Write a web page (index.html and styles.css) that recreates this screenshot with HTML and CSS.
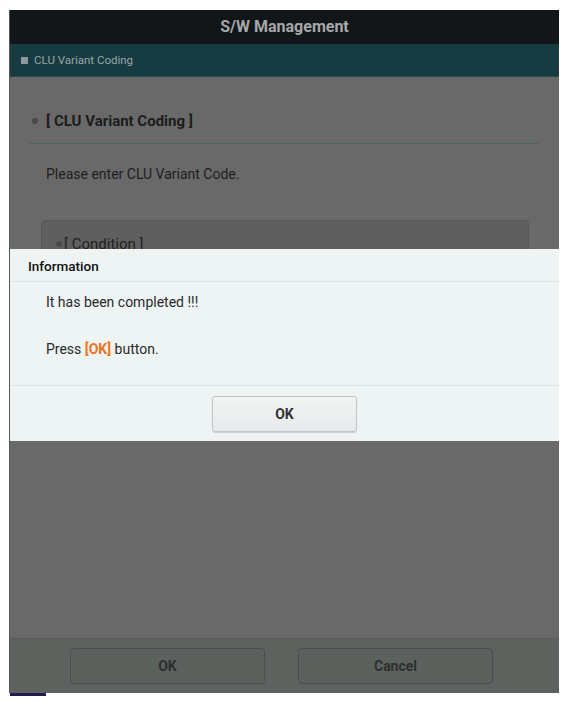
FILE: index.html
```html
<!DOCTYPE html>
<html lang="en">
<head>
    <meta charset="UTF-8">
    <meta name="viewport" content="width=device-width, initial-scale=1.0">
    <title>S/W Management</title>
    <link rel="stylesheet" href="styles.css">
</head>
<body>
    <div class="screen">
        <div class="titlebar">S/W Management</div>
        <div class="menubar"><span class="square"></span>CLU Variant Coding</div>
        <div class="content">
            <h2 class="section-title"><span class="dot"></span>[ CLU Variant Coding ]</h2>
            <p class="hint">Please enter CLU Variant Code.</p>
            <div class="condition">
                <h3><span class="dot small"></span>[ Condition ]</h3>
            </div>
        </div>
        <div class="footer">
            <button>OK</button>
            <button>Cancel</button>
        </div>

        <!-- popup over the dimmed screen -->
        <div class="dialog">
            <div class="dialog-header">Information</div>
            <div class="dialog-body">
                <p>It has been completed !!!</p>
                <p>Press <span class="key">[OK]</span> button.</p>
            </div>
            <div class="dialog-footer">
                <button>OK</button>
            </div>
        </div>
    </div>
    <div class="task-stub"></div>
</body>
</html>
```

FILE: styles.css
```css
body {
    margin: 0;
    background-color: #ffffff;
    font-family: Roboto, "Liberation Sans", sans-serif;
}

.screen {
    position: relative;
    margin: 10px 0 0 9px;
    width: 550px;
    height: 683px;
    display: flex;
    flex-direction: column;
    background-color: #696969;
    border-left: 1px solid #585858;
    box-sizing: border-box;
    overflow: hidden;
}

.titlebar {
    height: 34px;
    line-height: 34px;
    background-color: #121619;
    color: #a6a8a9;
    text-align: center;
    font-size: 16px;
    font-weight: bold;
}

.menubar {
    height: 33px;
    display: flex;
    align-items: center;
    padding-left: 11px;
    background-color: #163b41;
    color: #9aa5a7;
    font-size: 11.5px;
    border-bottom: 1px solid #2f4a4d;
    box-sizing: border-box;
}

.square {
    width: 7px;
    height: 7px;
    background-color: #8f999b;
    margin-right: 6px;
}

.content {
    flex: 1;
    padding: 0 20px 0 19px;
    overflow: hidden;
}

.section-title {
    display: flex;
    align-items: center;
    margin: 35px 0 0 0;
    padding: 0 0 13px 3px;
    font-size: 15px;
    font-weight: bold;
    color: #1c1c1c;
    border-bottom: 1px solid #4f6163;
}

.dot {
    width: 6px;
    height: 6px;
    border-radius: 50%;
    background-color: #4a4a4a;
    margin-right: 8px;
}

.dot.small {
    margin-right: 2px;
}

.hint {
    margin: 22px 0 0 17px;
    font-size: 14px;
    color: #1e1e1e;
}

.condition {
    margin: 38px 10px 0 12px;
    height: 120px;
    background-color: #5f5f5f;
    border: 1px solid #575757;
    border-radius: 4px;
    padding: 14px 14px;
}

.condition h3 {
    display: flex;
    align-items: center;
    margin: 0;
    font-size: 15px;
    font-weight: normal;
    color: #222;
}

.footer {
    height: 55px;
    display: flex;
    justify-content: center;
    align-items: center;
    gap: 33px;
    padding-right: 6px;
    background-color: #5e625f;
    border-top: 1px solid #595c59;
    box-sizing: border-box;
}

.footer button {
    width: 195px;
    height: 36px;
    background-color: #5d615e;
    border: 1px solid #4b4e4c;
    border-radius: 4px;
    font-family: inherit;
    font-size: 14px;
    font-weight: bold;
    color: #2c2f2d;
}

.dialog {
    position: absolute;
    top: 239px;
    left: 0;
    right: 0;
    background-color: #eef3f3;
    color: #222;
}

.dialog-header {
    height: 33px;
    line-height: 35px;
    padding-left: 18px;
    font-size: 13.5px;
    font-weight: 500;
    color: #111;
    border-bottom: 1px solid #dde4e4;
    box-sizing: border-box;
}

.dialog-body {
    height: 104px;
    padding: 12px 36px 0;
    box-sizing: border-box;
    border-bottom: 1px solid #dde4e4;
    font-size: 14px;
    color: #2a2a2a;
}

.dialog-body p {
    margin: 0 0 31px 0;
}

.key {
    color: #ee7222;
    font-weight: bold;
}

.dialog-footer {
    height: 55px;
    display: flex;
    justify-content: center;
    align-items: center;
}

.dialog-footer button {
    width: 145px;
    height: 36px;
    background: linear-gradient(#f2f4f4, #e6eaea);
    border: 1px solid #bfc4c4;
    border-radius: 3px;
    box-shadow: 0 1px 1px rgba(0, 0, 0, 0.15);
    font-family: inherit;
    font-size: 14px;
    font-weight: bold;
    color: #333;
}

.task-stub {
    margin-left: 10px;
    width: 36px;
    height: 3px;
    background-color: #231a4d;
}
```
